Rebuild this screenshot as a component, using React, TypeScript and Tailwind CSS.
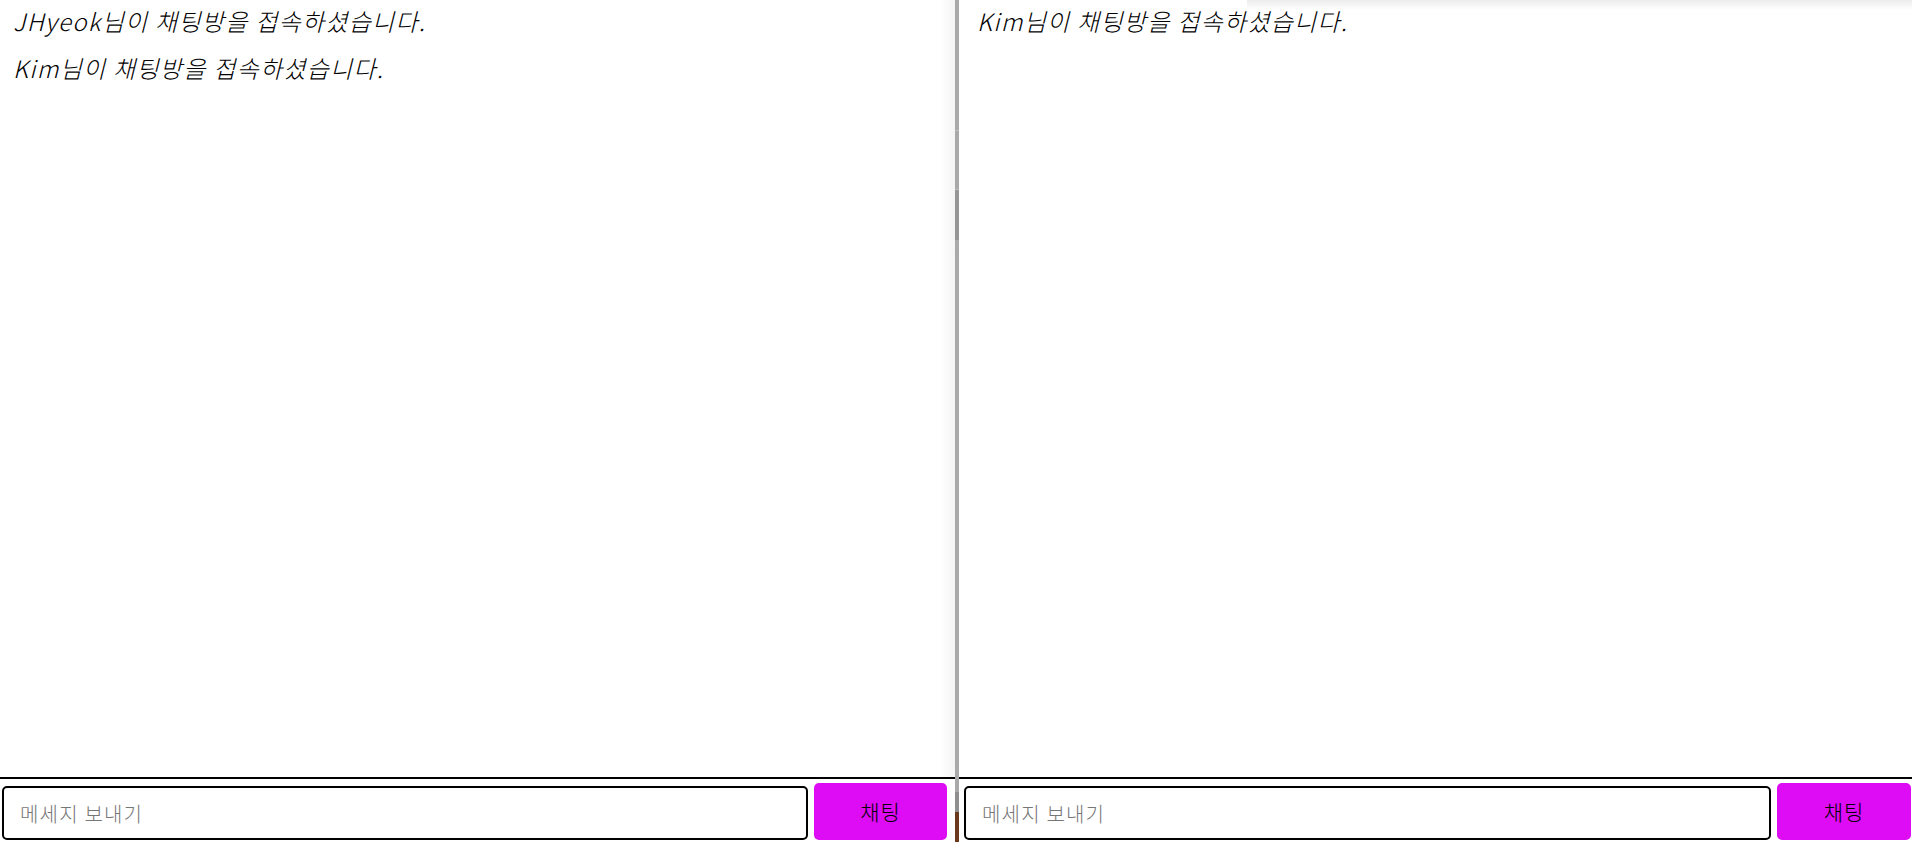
import { useState } from "react";

const FONT = { fontFamily: '"Noto Sans CJK KR", "Noto Sans", sans-serif' };

function ChatPane({
    messages,
    padLeft,
    inputWidth,
    buttonWidth,
    inputLeft,
    shadow,
}: {
    messages: string[];
    padLeft: string;
    inputWidth: string;
    buttonWidth: string;
    inputLeft: string;
    shadow?: boolean;
}) {
    const [text, setText] = useState("");

    return (
        <div className="relative flex h-full flex-1 flex-col bg-white" style={FONT}>
            {shadow && (
                <div className="pointer-events-none absolute top-0 right-0 h-[10px] w-[665px] bg-gradient-to-b from-[#ececec] to-transparent" />
            )}
            <div className={`flex h-[777px] flex-col gap-[15px] pt-[5px] ${padLeft}`}>
                {messages.map((m, i) => (
                    <p key={i} className="text-[24px] leading-[32px] font-light italic tracking-[1.3px] text-black">
                        {m}
                    </p>
                ))}
            </div>
            <div className="h-[2px] bg-black" />
            <div className={`flex items-end gap-[6px] pt-[4px] ${inputLeft}`}>
                <input
                    value={text}
                    onChange={(e) => setText(e.target.value)}
                    placeholder="메세지 보내기"
                    className={`h-[54px] ${inputWidth} rounded-[5px] border-2 border-black px-[16px] text-[20px] font-light tracking-[1.2px] text-black outline-none placeholder:text-[#767676]`}
                />
                <button
                    type="button"
                    className={`h-[57px] ${buttonWidth} rounded-[5px] bg-[#de0cf4] text-[21px] font-light tracking-[1px] text-black`}
                >
                    채팅
                </button>
            </div>
        </div>
    );
}

export default function App() {
    return (
        <div className="flex h-[842px] w-[1912px] overflow-hidden bg-white">
            <div className="relative flex h-full w-[955px]">
                <ChatPane
                    messages={[
                        "JHyeok님이 채팅방을 접속하셨습니다.",
                        "Kim님이 채팅방을 접속하셨습니다.",
                    ]}
                    padLeft="pl-[13px]"
                    inputLeft="pl-[2px]"
                    inputWidth="w-[806px]"
                    buttonWidth="w-[133px]"
                />
                <div className="pointer-events-none absolute top-0 right-0 h-[777px] w-[14px] bg-gradient-to-r from-transparent to-[#f4f4f4]" />
            </div>
            <div className="flex h-full w-[4px] flex-col bg-[#a9a9a9]">
                <div className="h-[130px]" />
                <div className="h-[60px] border-y border-[#bcbcbc]" />
                <div className="h-[50px] bg-[#969696]" />
                <div className="flex-1" />
                <div className="h-[20px] bg-[#8f8f8f]" />
                <div className="h-[30px] bg-[#6b3a1e]" />
            </div>
            <ChatPane
                messages={["Kim님이 채팅방을 접속하셨습니다."]}
                padLeft="pl-[18px]"
                inputLeft="pl-[5px]"
                inputWidth="w-[807px]"
                buttonWidth="w-[134px]"
                shadow
            />
        </div>
    );
}
